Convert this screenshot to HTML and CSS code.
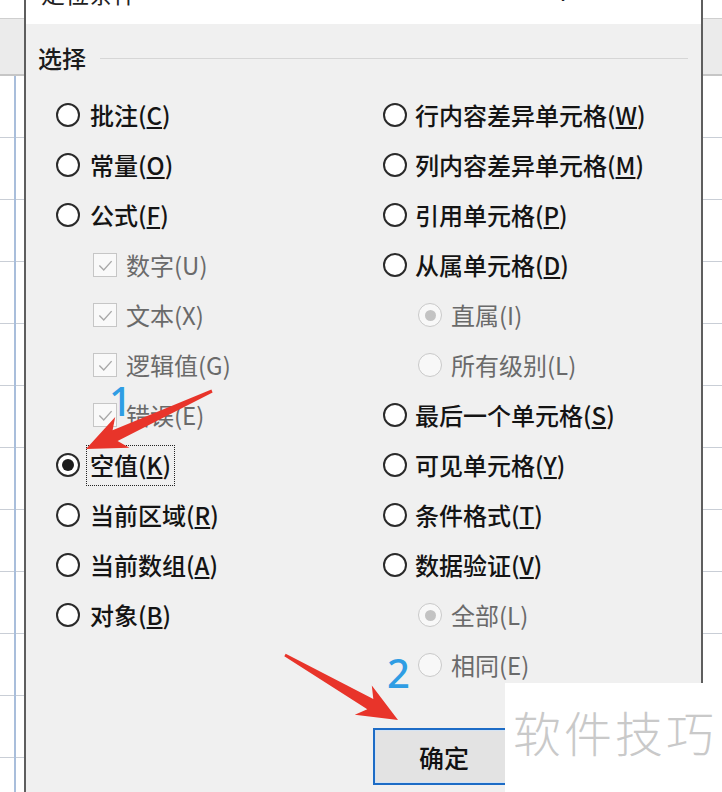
FILE: index.html
```html
<!DOCTYPE html>
<html lang="zh-CN">
<head>
<meta charset="utf-8">
<title>定位条件</title>
<link rel="stylesheet" href="styles.css">
</head>
<body>
<div class="page">
  <div class="strip strip-left">
    <div class="strip-top"></div>
    <div class="strip-head"></div>
    <div class="strip-cells cells-left"></div>
  </div>
  <div class="dialog">
    <div class="titlebar">
      <span class="title">定位条件</span>
      <span class="spacer"></span>
      <span class="help">?</span>
      <span class="close">×</span>
    </div>
    <div class="body">
      <div class="legend"><span>选择</span><span class="legend-line"></span></div>
      <div class="options">
        <div class="col col-left">
          <div class="opt"><span class="radio"></span><span class="lbl">批注(<u>C</u>)</span></div>
          <div class="opt"><span class="radio"></span><span class="lbl">常量(<u>O</u>)</span></div>
          <div class="opt"><span class="radio"></span><span class="lbl">公式(<u>F</u>)</span></div>
          <div class="opt sub"><span class="check"><svg viewBox="0 0 24 24" width="21" height="21"><polyline points="5,12 10,17 19,7" fill="none" stroke="#a8a8a8" stroke-width="1.6"/></svg></span><span class="lbl">数字(U)</span></div>
          <div class="opt sub"><span class="check"><svg viewBox="0 0 24 24" width="21" height="21"><polyline points="5,12 10,17 19,7" fill="none" stroke="#a8a8a8" stroke-width="1.6"/></svg></span><span class="lbl">文本(X)</span></div>
          <div class="opt sub"><span class="check"><svg viewBox="0 0 24 24" width="21" height="21"><polyline points="5,12 10,17 19,7" fill="none" stroke="#a8a8a8" stroke-width="1.6"/></svg></span><span class="lbl">逻辑值(G)</span></div>
          <div class="opt sub"><span class="check"><svg viewBox="0 0 24 24" width="21" height="21"><polyline points="5,12 10,17 19,7" fill="none" stroke="#a8a8a8" stroke-width="1.6"/></svg></span><span class="lbl">错误(E)</span></div>
          <div class="opt"><span class="radio"><span class="dot"></span></span><span class="lbl focus">空值(<u>K</u>)</span></div>
          <div class="opt"><span class="radio"></span><span class="lbl">当前区域(<u>R</u>)</span></div>
          <div class="opt"><span class="radio"></span><span class="lbl">当前数组(<u>A</u>)</span></div>
          <div class="opt"><span class="radio"></span><span class="lbl">对象(<u>B</u>)</span></div>
        </div>
        <div class="col col-right">
          <div class="opt"><span class="radio"></span><span class="lbl">行内容差异单元格(<u>W</u>)</span></div>
          <div class="opt"><span class="radio"></span><span class="lbl">列内容差异单元格(<u>M</u>)</span></div>
          <div class="opt"><span class="radio"></span><span class="lbl">引用单元格(<u>P</u>)</span></div>
          <div class="opt"><span class="radio"></span><span class="lbl">从属单元格(<u>D</u>)</span></div>
          <div class="opt sub"><span class="radio disabled"><span class="dot"></span></span><span class="lbl">直属(I)</span></div>
          <div class="opt sub"><span class="radio disabled"></span><span class="lbl">所有级别(L)</span></div>
          <div class="opt"><span class="radio"></span><span class="lbl">最后一个单元格(<u>S</u>)</span></div>
          <div class="opt"><span class="radio"></span><span class="lbl">可见单元格(<u>Y</u>)</span></div>
          <div class="opt"><span class="radio"></span><span class="lbl">条件格式(<u>T</u>)</span></div>
          <div class="opt"><span class="radio"></span><span class="lbl">数据验证(<u>V</u>)</span></div>
          <div class="opt sub"><span class="radio disabled"><span class="dot"></span></span><span class="lbl">全部(L)</span></div>
          <div class="opt sub"><span class="radio disabled"></span><span class="lbl">相同(E)</span></div>
        </div>
      </div>
      <div class="actions">
        <button class="btn" type="button">确定</button>
      </div>
    </div>
  </div>
  <div class="strip strip-right">
    <div class="strip-top"></div>
    <div class="strip-head"></div>
    <div class="strip-cells"></div>
  </div>
</div>

<svg class="arrows" width="722" height="792" viewBox="0 0 722 792">
  <polygon fill="#e8342a" points="211.4,389.6 112.6,430.2 115.2,416.9 86,449 129.4,447.7 117.6,441 212.6,392.4"/>
  <polygon fill="#e8342a" points="285.7,653.7 373.3,698.9 371.8,685.4 398,720 354.8,714.8 367.3,709.3 284.3,656.3"/>
</svg>
<span class="num num-1">1</span>
<span class="num num-2">2</span>
<div class="watermark">软件技巧</div>
</body>
</html>
```
FILE: styles.css
```css
body {
  margin: 0;
  width: 722px;
  height: 792px;
  overflow: hidden;
  background: #fff;
  font-family: "Noto Sans CJK SC", "Noto Sans", sans-serif;
  position: relative;
}

.page {
  display: flex;
  height: 792px;
}

.strip {
  display: flex;
  flex-direction: column;
}
.strip-left { width: 24px; }
.strip-right { flex: 1; }

.strip-top {
  height: 18px;
  background: #fff;
  border-bottom: 1px solid #cfcfcf;
}
.strip-head {
  height: 55px;
  background: #ebebeb;
  border-bottom: 2px solid #c6c6c6;
}
.strip-cells {
  flex: 1;
  background: repeating-linear-gradient(to bottom, #fff 0 61px, #c9ced6 61px 62px);
}
.cells-left {
  background:
    linear-gradient(to right, transparent 14px, #a9bedb 14px 16px, transparent 16px),
    repeating-linear-gradient(to bottom, #fff 0 61px, #c9ced6 61px 62px);
}

.dialog {
  width: 675px;
  border-left: 2px solid #5e5e5e;
  border-right: 2px solid #5e5e5e;
  display: flex;
  flex-direction: column;
}

.titlebar {
  height: 24px;
  background: #fff;
  overflow: hidden;
  display: flex;
  padding: 0 39px 0 15px;
  font-size: 24px;
  line-height: 24px;
  color: #222;
}
.title, .help, .close { margin-top: -19px; }
.spacer { flex: 1; }
.help { font-family: "Liberation Sans", sans-serif; }
.close { margin-left: 78px; font-family: "Liberation Sans", sans-serif; }

.body {
  flex: 1;
  background: #f0f0f0;
  padding: 22px 13px 0 12px;
}

.legend {
  display: flex;
  align-items: center;
  height: 24px;
  font-size: 24px;
  line-height: 24px;
  color: #1c1c1c;
  font-weight: 500;
}
.legend-line {
  flex: 1;
  height: 1px;
  background: #d6d6d6;
  margin-left: 14px;
}

.options {
  display: flex;
  margin-top: 20px;
  padding-left: 18px;
}
.col {
  display: flex;
  flex-direction: column;
}
.col-left { width: 327px; }

.opt {
  height: 50px;
  display: flex;
  align-items: center;
  font-size: 24px;
  line-height: 30px;
  color: #141414;
  font-weight: 500;
}
.opt u {
  text-decoration: underline;
  text-decoration-thickness: 1.5px;
  text-underline-offset: 2px;
}

.radio {
  width: 24px;
  height: 24px;
  box-sizing: border-box;
  border: 2px solid #2a2a2a;
  border-radius: 50%;
  background: #fff;
  flex: none;
  margin-right: 10px;
  display: flex;
  align-items: center;
  justify-content: center;
}
.col-right .radio { margin-right: 8px; }
.dot {
  width: 12px;
  height: 12px;
  border-radius: 50%;
  background: #1c1c1c;
}

.sub {
  padding-left: 37px;
  color: #6a6a6a;
  font-weight: 400;
}
.col-right .sub { padding-left: 35px; }
.col-right .sub .radio { margin-right: 9px; }

.radio.disabled {
  border: 1.5px solid #c9c9c9;
  background: #f8f8f8;
}
.radio.disabled .dot {
  width: 11px;
  height: 11px;
  background: #c3c3c3;
}

.check {
  width: 24px;
  height: 24px;
  box-sizing: border-box;
  border: 1.5px solid #c6c6c6;
  background: #f9f9f9;
  margin-right: 9px;
  flex: none;
  display: flex;
  align-items: center;
  justify-content: center;
}
.check svg { display: block; }

.focus {
  border: 1px dotted #222;
  height: 41px;
  box-sizing: border-box;
  display: flex;
  align-items: center;
  padding: 0 3px;
  margin-left: -4px;
}

.actions {
  margin-top: 38px;
  padding-left: 335px;
}
.btn {
  width: 142px;
  height: 57px;
  box-sizing: border-box;
  border: 2px solid #1d6cc6;
  box-shadow: inset 0 0 0 1px #d4e3f3;
  background: #e3e3e3;
  font-family: "Noto Sans CJK SC", sans-serif;
  font-size: 25px;
  font-weight: 500;
  color: #111;
  padding: 0;
}

.arrows {
  position: absolute;
  left: 0;
  top: 0;
  pointer-events: none;
}

.num {
  position: absolute;
  font-family: "Noto Sans", sans-serif;
  font-weight: 500;
  color: #2f9de4;
  font-size: 40px;
  line-height: 40px;
}
.num-1 { left: 109px; top: 381px; }
.num-2 { left: 387px; top: 653px; }

.watermark {
  position: absolute;
  left: 505px;
  top: 683px;
  width: 217px;
  height: 109px;
  box-sizing: border-box;
  background: #fff;
  padding: 24px 0 0 8px;
  font-size: 48px;
  line-height: 48px;
  letter-spacing: 3px;
  color: #c9c9c9;
  font-weight: 300;
  white-space: nowrap;
}
```
